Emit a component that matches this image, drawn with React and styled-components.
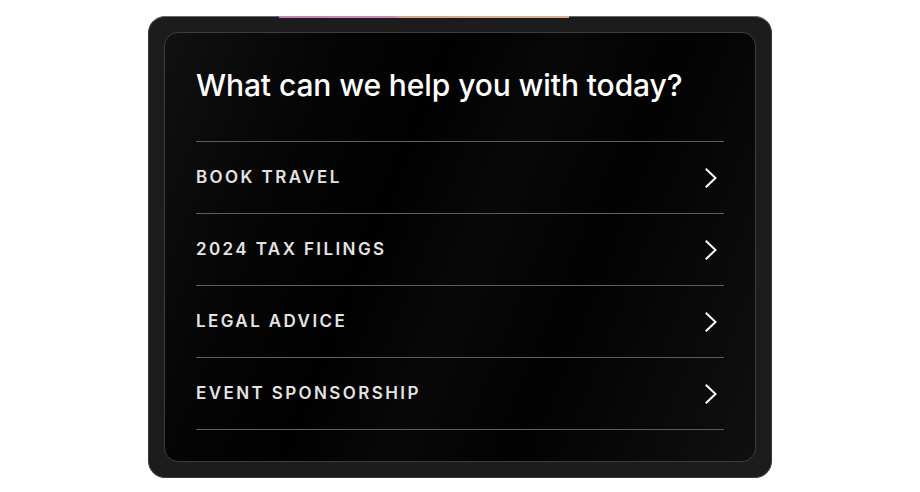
import React from 'react';
import styled, { createGlobalStyle } from 'styled-components';

const GlobalStyle = createGlobalStyle`
  html, body {
    margin: 0;
    padding: 0;
    background: #ffffff;
  }
  body {
    font-family: Inter, "Liberation Sans", sans-serif;
    -webkit-font-smoothing: antialiased;
  }
`;

const Page = styled.div`
  width: 920px;
  height: 492px;
  display: flex;
  justify-content: center;
  padding-top: 16px;
  box-sizing: border-box;
`;

const Frame = styled.div`
  position: relative;
  width: 624px;
  height: 462px;
  box-sizing: border-box;
  padding: 15px;
  border: 1px solid #3a3a3a;
  border-top-color: #6a6a6a;
  border-radius: 17px;
  background: #1c1c1c;

  /* coloured glow strip along the top edge */
  &::before {
    content: '';
    position: absolute;
    top: -1px;
    left: 130px;
    width: 290px;
    height: 2px;
    background: linear-gradient(
      90deg,
      #c282b6 0%,
      #c98db4 40%,
      #d3a690 42%,
      #d7b097 100%
    );
  }
`;

const Panel = styled.div`
  height: 100%;
  box-sizing: border-box;
  padding: 34px 31px 31px;
  border: 1px solid #3d3d3d;
  border-radius: 14px;
  background: linear-gradient(
    112deg,
    #111111 0%,
    #050505 22%,
    #010101 38%,
    #080808 52%,
    #020202 68%,
    #0a0a0a 86%,
    #101010 100%
  );
`;

const Heading = styled.h1`
  margin: 0 0 38px;
  font-size: 30px;
  line-height: 36px;
  font-weight: 500;
  letter-spacing: -0.1px;
  color: #ffffff;
`;

const List = styled.ul`
  list-style: none;
  margin: 0;
  padding: 0;
  border-top: 1px solid #5c5c5c;
`;

const Row = styled.li`
  height: 71px;
  display: flex;
  align-items: center;
  justify-content: space-between;
  border-bottom: 1px solid #5c5c5c;
  cursor: pointer;
`;

const Label = styled.span`
  font-size: 17px;
  font-weight: 600;
  letter-spacing: 2.4px;
  color: #e4e4e4;
  text-transform: uppercase;
  margin-top: -1px;
`;

const Chevron = styled.svg`
  width: 12px;
  height: 20px;
  margin-right: 7px;
  color: #ffffff;
`;

const topics = ['Book travel', '2024 Tax filings', 'Legal advice', 'Event sponsorship'];

function ChevronIcon() {
  return (
    <Chevron viewBox="0 0 12 20" fill="none">
      <polyline
        points="1.5,1.5 10.5,10 1.5,18.5"
        stroke="currentColor"
        strokeWidth="2"
        strokeLinecap="square"
        strokeLinejoin="miter"
      />
    </Chevron>
  );
}

export default function App() {
  return (
    <>
      <GlobalStyle />
      <Page>
        <Frame>
          <Panel>
            <Heading>What can we help you with today?</Heading>
            <List>
              {topics.map((t) => (
                <Row key={t}>
                  <Label>{t}</Label>
                  <ChevronIcon />
                </Row>
              ))}
            </List>
          </Panel>
        </Frame>
      </Page>
    </>
  );
}
